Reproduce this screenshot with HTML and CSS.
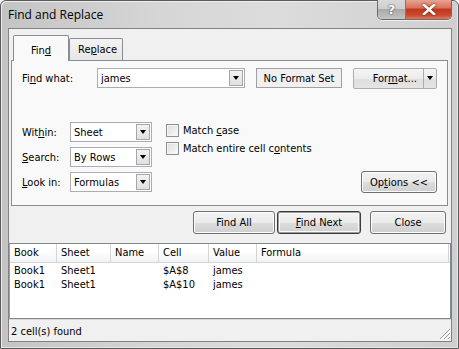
FILE: index.html
```html
<!DOCTYPE html>
<html>
<head>
<meta charset="utf-8">
<link rel="stylesheet" href="styles.css">
</head>
<body>
<div class="window">
  <div class="titlebar">
    <span class="title">Find and Replace</span>
    <div class="caption-btns">
      <div class="cbtn help">?</div>
      <div class="cbtn close">
        <svg width="14" height="11" viewBox="0 0 14 11"><path d="M2 1 L12 10 M12 1 L2 10" stroke="#fff" stroke-width="2.6" stroke-linecap="square"/></svg>
      </div>
    </div>
  </div>
  <div class="client">
    <div class="tabs">
      <div class="tab active">Fin<u>d</u></div>
      <div class="tab">Re<u>p</u>lace</div>
    </div>
    <div class="panel">
      <div class="row1">
        <label class="lbl lbl-find">Fi<u>n</u>d what:</label>
        <div class="combo combo-find"><span class="val">james</span><span class="drop"><i></i></span></div>
        <div class="nfs">No Format Set</div>
        <div class="split">
          <span class="split-main">For<u>m</u>at...</span><span class="split-drop"><i></i></span>
        </div>
      </div>
      <div class="lower">
        <div class="opts">
          <div class="optrow"><label class="lbl lbl-opt">Wit<u>h</u>in:</label><div class="combo combo-sm"><span class="val">Sheet</span><span class="drop"><i></i></span></div></div>
          <div class="optrow"><label class="lbl lbl-opt"><u>S</u>earch:</label><div class="combo combo-sm"><span class="val">By Rows</span><span class="drop"><i></i></span></div></div>
          <div class="optrow"><label class="lbl lbl-opt"><u>L</u>ook in:</label><div class="combo combo-sm"><span class="val">Formulas</span><span class="drop"><i></i></span></div></div>
        </div>
        <div class="checks">
          <div class="chk"><span class="box"></span><span class="chk-text">Match <u>c</u>ase</span></div>
          <div class="chk"><span class="box"></span><span class="chk-text">Match entire cell c<u>o</u>ntents</span></div>
        </div>
        <div class="opt-btn-wrap">
          <div class="btn btn-options"><span>Op<u>t</u>ions &lt;&lt;</span></div>
        </div>
      </div>
    </div>
    <div class="actions">
      <div class="btn btn-act"><span>Find All</span></div>
      <div class="btn btn-act default"><span><u>F</u>ind Next</span></div>
      <div class="btn btn-act btn-close"><span>Close</span></div>
    </div>
    <div class="list">
      <div class="lhead">
        <span class="c c1">Book</span><span class="c c2">Sheet</span><span class="c c3">Name</span><span class="c c4">Cell</span><span class="c c5">Value</span><span class="c c6">Formula</span>
      </div>
      <div class="lrow">
        <span class="c c1">Book1</span><span class="c c2">Sheet1</span><span class="c c3"></span><span class="c c4">$A$8</span><span class="c c5">james</span><span class="c c6"></span>
      </div>
      <div class="lrow">
        <span class="c c1">Book1</span><span class="c c2">Sheet1</span><span class="c c3"></span><span class="c c4">$A$10</span><span class="c c5">james</span><span class="c c6"></span>
      </div>
    </div>
    <div class="status">
      <span>2 cell(s) found</span>
      <svg class="grip" width="12" height="12" viewBox="0 0 12 12"><path d="M11 1 L1 11 M11 5 L5 11 M11 9 L9 11" stroke="#a0a0a0" stroke-width="1"/><path d="M12 2 L2 12 M12 6 L6 12 M12 10 L10 12" stroke="#fff" stroke-width="1"/></svg>
    </div>
  </div>
</div>
</body>
</html>
```
FILE: styles.css
```css
* { box-sizing: border-box; }
html, body { margin: 0; padding: 0; }
body {
  width: 459px;
  height: 349px;
  background: #ffffff;
  font-family: "DejaVu Sans Condensed", "DejaVu Sans", sans-serif;
  font-size: 11px;
  color: #000;
  overflow: hidden;
}
u { text-decoration: underline; text-underline-offset: 1px; }

.window {
  width: 459px;
  height: 349px;
  border: 1px solid #5a5a5a;
  border-radius: 6px 6px 0 0;
  background: linear-gradient(90deg, #c4c4c4 0%, #d6d6d6 35%, #dcdcdc 60%, #cfcfcf 100%);
  display: flex;
  flex-direction: column;
  padding: 0 6px 6px 7px;
  box-shadow: inset 1px 1px 0 #eeeeee, inset -1px -1px 0 #e6e6e6;
}

.titlebar {
  height: 27px;
  display: flex;
  align-items: flex-start;
  justify-content: space-between;
  flex: none;
}
.title {
  font-family: "Open Sans", "Noto Sans", sans-serif;
  font-size: 12px;
  margin-top: 5px;
  color: #000;
}
.caption-btns {
  display: flex;
  margin-top: -1px;
  border: 1px solid #6b6b6b;
  border-top: none;
  border-radius: 0 0 5px 5px;
  overflow: hidden;
  box-shadow: 0 1px 0 #eeeeee;
}
.cbtn {
  height: 19px;
  display: flex;
  align-items: center;
  justify-content: center;
}
.help {
  width: 28px;
  background: linear-gradient(#d9d9d9 0%, #cfcfcf 45%, #a9a9a9 50%, #c4c4c4 100%);
  color: #fff;
  font-family: "DejaVu Sans", sans-serif;
  font-weight: bold;
  font-size: 13px;
  text-shadow: 0 0 2px #555, 0 0 1px #333;
  border-right: 1px solid #7a7a7a;
}
.close {
  width: 45px;
  background: linear-gradient(#e8a493 0%, #d9735e 40%, #c2381f 50%, #c84a30 80%, #e07b5e 100%);
}
.close svg { filter: drop-shadow(0 0 1px #6b1a0c); }

.client {
  flex: 1;
  background: #f0f0f0;
  border: 1px solid #828282;
  display: flex;
  flex-direction: column;
}

.tabs {
  display: flex;
  align-items: flex-end;
  height: 31px;
  padding-left: 4px;
  position: relative;
  z-index: 1;
}
.tab {
  height: 22px;
  border: 1px solid #898c95;
  border-bottom: none;
  border-radius: 2px 2px 0 0;
  background: linear-gradient(#f3f3f3, #e7e7e7);
  padding: 4px 8px 0 8px;
  width: 54px;
  text-align: center;
  margin-left: -1px;
}
.tab.active {
  height: 26px;
  width: 56px;
  background: #f9f9f9;
  padding-top: 8px;
  margin-bottom: -1px;
  margin-left: 0;
  margin-right: 1px;
}

.panel {
  margin: 0 3px 0 2px;
  height: 146px;
  border: 1px solid #898c95;
  background: #f9f9f9;
  padding: 7px 10px 0 10px;
  display: flex;
  flex-direction: column;
}

.row1 {
  display: flex;
  align-items: center;
  height: 20px;
}
.lbl { display: inline-block; }
.lbl-find { width: 75px; }

.combo {
  height: 20px;
  border: 1px solid #abadb3;
  background: #fff;
  display: flex;
  align-items: center;
  padding: 1px;
}
.combo .val { flex: 1; padding-left: 2px; }
.combo .drop {
  width: 14px;
  height: 16px;
  border: 1px solid #a6a6a6;
  background: linear-gradient(#f3f3f3, #e0e0e0);
  display: flex;
  align-items: center;
  justify-content: center;
}
.combo .drop i, .split-drop i {
  display: block;
  width: 0; height: 0;
  border-left: 3.5px solid transparent;
  border-right: 3.5px solid transparent;
  border-top: 4px solid #000;
}
.combo-find { width: 148px; }
.nfs {
  margin-left: 11px;
  width: 86px;
  height: 20px;
  border: 1px solid #a0a0a0;
  background: #f0f0f0;
  display: flex;
  align-items: center;
  justify-content: center;
}
.split {
  margin-left: 11px;
  width: 84px;
  height: 21px;
  border: 1px solid #acacac;
  border-radius: 2px;
  background: linear-gradient(#f5f5f5 0%, #ececec 50%, #dfdfdf 51%, #e4e4e4 100%);
  display: flex;
  align-items: center;
}
.split-main { flex: 1; text-align: right; padding-right: 6px; }
.split-drop {
  width: 13px;
  height: 100%;
  border-left: 1px solid #acacac;
  display: flex;
  align-items: center;
  justify-content: center;
}

.lower {
  display: flex;
  margin-top: 34px;
  height: 72px;
}
.opts { display: flex; flex-direction: column; gap: 5px; }
.optrow { display: flex; align-items: center; height: 20px; }
.lbl-opt { width: 48px; }
.combo-sm { width: 82px; }

.checks {
  margin-left: 14px;
  display: flex;
  flex-direction: column;
  gap: 5px;
  padding-top: 2px;
}
.chk { display: flex; align-items: center; height: 13px; }
.chk .box {
  width: 13px; height: 13px;
  border: 1px solid #8e8f8f;
  background: linear-gradient(135deg, #dcdcdc, #fbfbfb);
  box-shadow: inset 0 0 0 1px #f4f4f4;
  margin-right: 4px;
}

.opt-btn-wrap {
  flex: 1;
  display: flex;
  justify-content: flex-end;
  align-items: flex-end;
}

.btn {
  height: 22px;
  border: 1px solid #707070;
  border-radius: 3px;
  background: linear-gradient(#f2f2f2 0%, #ebebeb 50%, #dddddd 51%, #cfcfcf 100%);
  box-shadow: inset 0 0 0 1px #fcfcfc;
  display: flex;
  align-items: center;
  justify-content: center;
}
.btn-options { width: 76px; margin-bottom: 1px; }

.actions {
  display: flex;
  justify-content: flex-end;
  padding: 5px 5px 0 0;
  gap: 2px;
  height: 35px;
  flex: none;
}
.btn-act { width: 82px; height: 23px; }
.btn-act.default {
  width: 84px;
  border-color: #3c3c3c;
  box-shadow: inset 0 0 0 1px #9a9a9a, inset 0 0 0 2px #fafafa;
}
.btn-close { margin-left: 7px; width: 76px; }

.list {
  margin-top: 2px;
  flex: 1;
  border: 1px solid #828790;
  border-left-color: #a0a0a0;
  background: #fff;
}
.lhead {
  display: flex;
  height: 19px;
  background: linear-gradient(#ffffff 0%, #ffffff 40%, #f1f2f4 100%);
  border-bottom: 1px solid #d5d5d5;
}
.lhead .c {
  border-right: 1px solid #d5d5d5;
  line-height: 18px;
}
.c { display: block; padding-left: 4px; white-space: nowrap; overflow: hidden; }
.c1 { width: 47px; }
.c2 { width: 54px; }
.c3 { width: 48px; }
.c4 { width: 50px; }
.c5 { width: 48px; }
.c6 { width: 192px; }
.lrow { display: flex; height: 14px; line-height: 14px; }
.lhead + .lrow { margin-top: 1px; }

.status {
  height: 22px;
  flex: none;
  border-top: 1px solid #d7d7d7;
  display: flex;
  align-items: center;
  justify-content: space-between;
  padding-left: 2px;
  padding-top: 1px;
}
.grip { align-self: flex-end; margin-bottom: 1px; }
```
